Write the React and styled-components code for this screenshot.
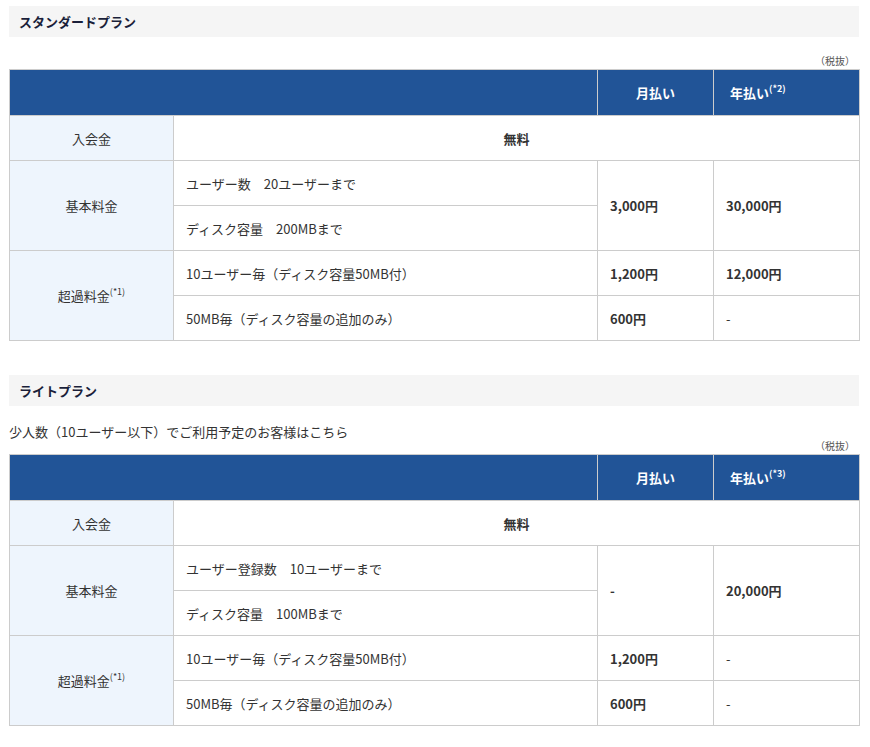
import React from 'react';
import styled, { createGlobalStyle } from 'styled-components';

const Global = createGlobalStyle`
  body { margin: 0; background: #fff; font-family: "Noto Sans CJK JP", "Noto Sans", sans-serif; color: #333; }
`;

const Page = styled.div`
  padding: 6px 11px 0 9px;
`;

const Heading = styled.h3`
  margin: 0;
  background: #f5f5f5;
  height: 31px;
  line-height: 31px;
  padding-left: 10px;
  font-size: 13px;
  font-weight: bold;
  color: #1a1f3a;
`;

const Lead = styled.p`
  margin: 16px 0 0;
  font-size: 13px;
  line-height: 20px;
`;

const Tax = styled.div`
  text-align: right;
  font-size: 10px;
  color: #555;
  line-height: 12px;
  margin-top: ${p => p.$top}px;
  padding-right: 4px;
  margin-bottom: 2px;
`;

const Table = styled.table`
  width: 850px;
  border-collapse: collapse;
  table-layout: fixed;
  font-size: 13px;
  margin-bottom: 34px;
  td, th { border: 1px solid #ccc; }
`;

const HeadCell = styled.th`
  background: #215497;
  color: #fff;
  height: 45px;
  font-weight: bold;
  text-align: ${p => (p.$left ? 'left' : 'center')};
  padding: 0 ${p => (p.$left ? 16 : 0)}px;
`;

const Label = styled.td`
  background: #eef5fd;
  text-align: center;
  color: #333;
`;

const Cell = styled.td`
  height: 44px;
  padding: 0 12px;
  text-align: ${p => (p.$center ? 'center' : 'left')};
  font-weight: ${p => (p.$bold ? 'bold' : 'normal')};
`;

const Sup = styled.sup`
  font-size: 9px;
  vertical-align: 6px;
  line-height: 0;
`;

const PlanTable = ({ note, base, monthBase, yearBase }) => (
  <Table>
    <colgroup>
      <col style={{ width: 164 }} />
      <col style={{ width: 424 }} />
      <col style={{ width: 116 }} />
      <col style={{ width: 146 }} />
    </colgroup>
    <thead>
      <tr>
        <HeadCell colSpan={2} />
        <HeadCell>月払い</HeadCell>
        <HeadCell $left>年払い<Sup>(*{note})</Sup></HeadCell>
      </tr>
    </thead>
    <tbody>
      <tr>
        <Label>入会金</Label>
        <Cell colSpan={3} $center $bold>無料</Cell>
      </tr>
      <tr>
        <Label rowSpan={2}>基本料金</Label>
        <Cell>{base}</Cell>
        <Cell rowSpan={2} $bold>{monthBase}</Cell>
        <Cell rowSpan={2} $bold>{yearBase}</Cell>
      </tr>
      <tr>
        <Cell>ディスク容量　{note === 2 ? '200MB' : '100MB'}まで</Cell>
      </tr>
      <tr>
        <Label rowSpan={2}>超過料金<Sup>(*1)</Sup></Label>
        <Cell>10ユーザー毎（ディスク容量50MB付）</Cell>
        <Cell $bold>1,200円</Cell>
        <Cell $bold={note === 2}>{note === 2 ? '12,000円' : '-'}</Cell>
      </tr>
      <tr>
        <Cell>50MB毎（ディスク容量の追加のみ）</Cell>
        <Cell $bold>600円</Cell>
        <Cell>-</Cell>
      </tr>
    </tbody>
  </Table>
);

export default function App() {
  return (
    <Page>
      <Global />
      <Heading>スタンダードプラン</Heading>
      <Tax $top={18}>（税抜）</Tax>
      <PlanTable note={2} base="ユーザー数　20ユーザーまで" monthBase="3,000円" yearBase="30,000円" />
      <Heading>ライトプラン</Heading>
      <Lead>少人数（10ユーザー以下）でご利用予定のお客様はこちら</Lead>
      <Tax $top={-2}>（税抜）</Tax>
      <PlanTable note={3} base="ユーザー登録数　10ユーザーまで" monthBase="-" yearBase="20,000円" />
    </Page>
  );
}
